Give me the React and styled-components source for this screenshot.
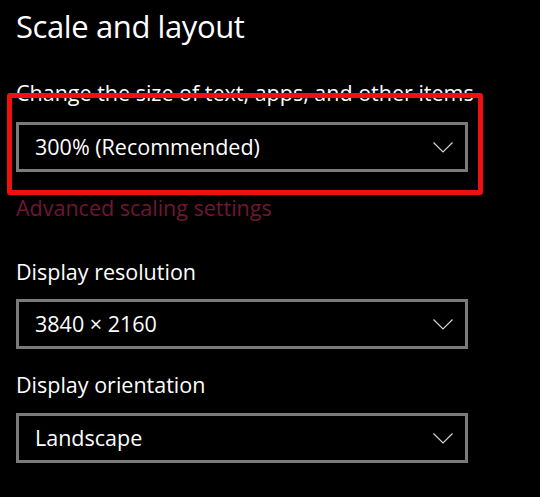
import React from "react";
import styled, { createGlobalStyle } from "styled-components";

const Global = createGlobalStyle`
  html, body { margin: 0; padding: 0; background: #000; }
  body { font-family: "Open Sans", "Noto Sans", sans-serif; color: #fff; }
  #root { width: 540px; height: 497px; overflow: hidden; }
`;

const Page = styled.div`
  position: relative;
  box-sizing: border-box;
  width: 540px;
  height: 497px;
  padding: 6px 0 0 16px;
  background: #000;
`;

const Title = styled.h1`
  margin: 0;
  font-size: 31px;
  line-height: 40px;
  font-weight: 400;
  letter-spacing: -0.4px;
  color: #fff;
`;

const Section = styled.div`
  position: relative;
  display: flex;
  flex-direction: column;
  margin-top: ${(p) => p.$top}px;
`;

const Label = styled.div`
  font-size: 21.5px;
  line-height: 28px;
  color: #fff;
  margin-bottom: ${(p) => p.$gap}px;
  white-space: nowrap;
`;

const Select = styled.div`
  box-sizing: border-box;
  width: 452px;
  height: 50px;
  border: 3px solid #7a7a7a;
  display: flex;
  align-items: center;
  justify-content: space-between;
  padding: 0 12px 0 16px;
  font-size: 21.5px;
  line-height: 28px;
  color: #fff;
`;

const Link = styled.div`
  margin-top: 22px;
  font-size: 21.5px;
  line-height: 28px;
  color: #6f1636;
`;

const Highlight = styled.div`
  position: absolute;
  left: -9px;
  top: 14px;
  width: 476px;
  height: 102px;
  box-sizing: border-box;
  border: 5px solid #f01010;
  border-radius: 3px;
  pointer-events: none;
`;

const Chevron = () => (
  <svg width="20" height="11" viewBox="0 0 20 11" fill="none">
    <path d="M0.5 0.5 L10 10 L19.5 0.5" stroke="#d4d4d4" strokeWidth="1.2" />
  </svg>
);

const Dropdown = ({ value }) => (
  <Select>
    <span>{value}</span>
    <Chevron />
  </Select>
);

export default function App() {
  return (
    <>
      <Global />
      <Page>
        <Title>Scale and layout</Title>
        <Section $top={33}>
          <Label $gap={15}>Change the size of text, apps, and other items</Label>
          <Dropdown value="300% (Recommended)" />
          <Highlight />
          <Link>Advanced scaling settings</Link>
        </Section>
        <Section $top={36}>
          <Label $gap={13}>Display resolution</Label>
          <Dropdown value="3840 × 2160" />
        </Section>
        <Section $top={22}>
          <Label $gap={14}>Display orientation</Label>
          <Dropdown value="Landscape" />
        </Section>
      </Page>
    </>
  );
}
